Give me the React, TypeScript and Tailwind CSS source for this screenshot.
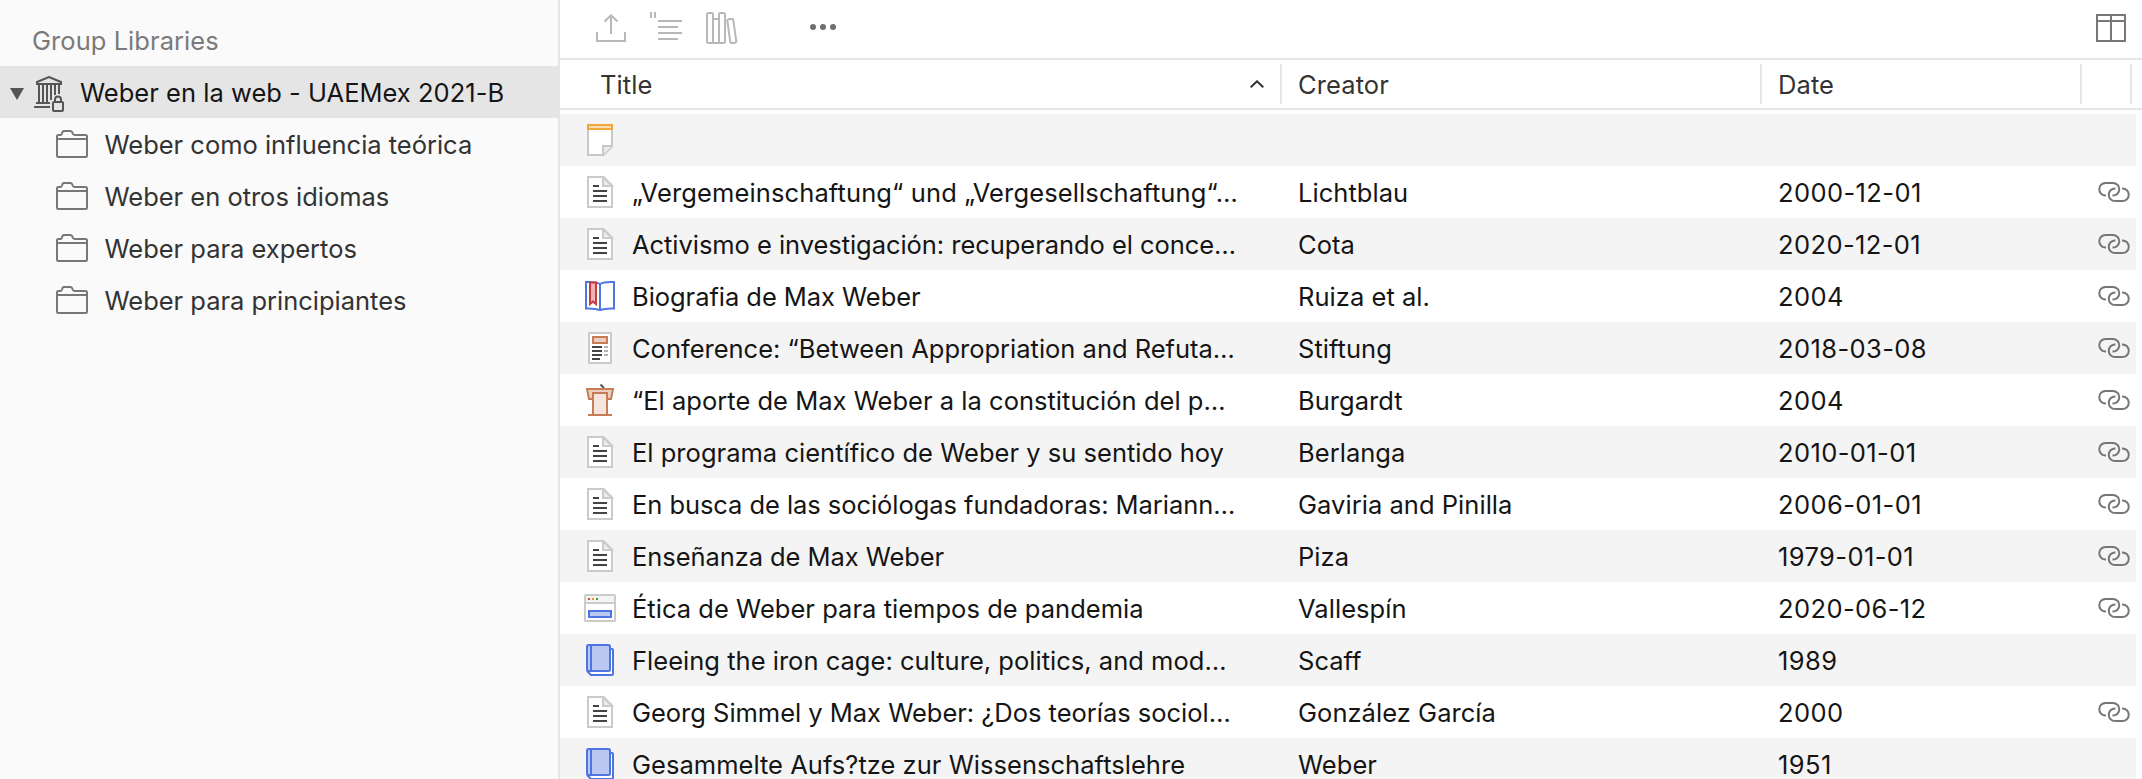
import React from "react";

type Kind = "note" | "article" | "dictionary" | "news" | "podium" | "web" | "book";
type Row = { kind: Kind; title: string; tracking?: string; creator: string; date: string; link: boolean };

const rows: Row[] = [
  { kind: "note", title: "", creator: "", date: "", link: false },
  { kind: "article", title: "„Vergemeinschaftung“ und „Vergesellschaftung“…", tracking: "tracking-[0.12px]", creator: "Lichtblau", date: "2000-12-01", link: true },
  { kind: "article", title: "Activismo e investigación: recuperando el conce…", tracking: "tracking-[-0.05px]", creator: "Cota", date: "2020-12-01", link: true },
  { kind: "dictionary", title: "Biografia de Max Weber", tracking: "tracking-[-0.05px]", creator: "Ruiza et al.", date: "2004", link: true },
  { kind: "news", title: "Conference: “Between Appropriation and Refuta…", tracking: "tracking-[-0.01px]", creator: "Stiftung", date: "2018-03-08", link: true },
  { kind: "podium", title: "“El aporte de Max Weber a la constitución del p…", tracking: "tracking-[0.02px]", creator: "Burgardt", date: "2004", link: true },
  { kind: "article", title: "El programa científico de Weber y su sentido hoy", tracking: "tracking-[0.02px]", creator: "Berlanga", date: "2010-01-01", link: true },
  { kind: "article", title: "En busca de las sociólogas fundadoras: Mariann…", tracking: "tracking-[-0.06px]", creator: "Gaviria and Pinilla", date: "2006-01-01", link: true },
  { kind: "article", title: "Enseñanza de Max Weber", tracking: "tracking-[-0.07px]", creator: "Piza", date: "1979-01-01", link: true },
  { kind: "web", title: "Ética de Weber para tiempos de pandemia", tracking: "tracking-[0.03px]", creator: "Vallespín", date: "2020-06-12", link: true },
  { kind: "book", title: "Fleeing the iron cage: culture, politics, and mod…", tracking: "tracking-[0.02px]", creator: "Scaff", date: "1989", link: false },
  { kind: "article", title: "Georg Simmel y Max Weber: ¿Dos teorías sociol…", tracking: "tracking-[-0.02px]", creator: "González García", date: "2000", link: true },
  { kind: "book", title: "Gesammelte Aufs?tze zur Wissenschaftslehre", tracking: "tracking-[0.03px]", creator: "Weber", date: "1951", link: false },
];

const folders = ["Weber como influencia teórica", "Weber en otros idiomas", "Weber para expertos", "Weber para principiantes"];

function ItemIcon({ kind }: { kind: Kind }) {
  return (
    <svg className="size-8 shrink-0" viewBox="0 0 32 32" fill="none" strokeWidth="2">
      {kind === "note" && (
        <>
          <path d="M4 5V31H19.5L28 22.5V5Z" fill="#fff" stroke="#c8c8c8" />
          <path d="M19 31V22H28" fill="#ececec" stroke="#c8c8c8" />
          <path d="M4 1H28V5H4Z" fill="#f9dfb3" stroke="#f0a73a" />
        </>
      )}
      {kind === "article" && (
        <>
          <path d="M4 1H19.5L28 9.5V31H4Z" fill="#fff" stroke="#cbcbcb" />
          <path d="M19 1V10H28Z" fill="#ececec" stroke="#cbcbcb" />
          <path d="M9 10H15M9 15H23M9 20H23M9 25H23" stroke="#444" />
        </>
      )}
      {kind === "dictionary" && (
        <>
          <path d="M16 4C12 1.600 8 2 2 2V28.500C8 28.300 12 28.500 16 30.200C20 28.500 24 28.300 30 28.500V2C24 2 20 1.600 16 4Z" fill="#fff" stroke="#5077e0" />
          <path d="M16 4V30" stroke="#5077e0" />
          <path d="M6 2.500H12V24L9 21.500L6 24Z" fill="#efb3b5" stroke="#cb3a41" />
        </>
      )}
      {kind === "news" && (
        <>
          <path d="M5 1H27V31H5Z" fill="#fff" stroke="#cbcbcb" />
          <path d="M9 5H23V11H9Z" fill="#eccfc0" stroke="#c67d56" />
          <path d="M8 15H18M8 19H18M8 23H18M8 27H16" stroke="#444" />
          <path d="M20 15H24M20 19H24M20 23H24" stroke="#b3b3b3" />
        </>
      )}
      {kind === "podium" && (
        <>
          <path d="M16.500 0.500L20 4" stroke="#555" />
          <path d="M3 5H29L27 15H5Z" fill="#eccfc0" stroke="#c67d56" />
          <path d="M9 31V9H23V31" fill="#f4e6df" stroke="#c67d56" />
          <path d="M4 31H28" stroke="#c67d56" />
        </>
      )}
      {kind === "web" && (
        <>
          <rect x="1" y="3" width="30" height="26" rx="1" fill="#fff" stroke="#cbcbcb" />
          <path d="M2 4H30V10H2Z" fill="#f4f4f4" />
          <path d="M1 11H31" stroke="#cbcbcb" />
          <path d="M4 7H6" stroke="#d9443d" />
          <path d="M8 7H10" stroke="#e39b2e" />
          <path d="M12 7H14" stroke="#3f9e3f" />
          <path d="M5 19H27V25H5Z" fill="#b9c7f1" stroke="#4d74e0" />
        </>
      )}
      {kind === "book" && (
        <>
          <path d="M26 5H28Q29 5 29 6V30Q29 31 28 31H7L3 27" fill="#fff" stroke="#4d74e0" />
          <rect x="3" y="1" width="23" height="26" rx="1.500" fill="#b9c7f1" stroke="#4d74e0" />
          <path d="M7 1V27" stroke="#4d74e0" />
        </>
      )}
    </svg>
  );
}

function Folder() {
  return (
    <svg className="h-[28px] w-8 shrink-0" viewBox="0 0 32 28" fill="none" stroke="#777" strokeWidth="2">
      <path d="M1 9V6.500Q1 5 2.500 5H4.500Q5.500 5 6 3.500Q6.500 1 8 1H14.500Q16 1 16.500 3Q17 5 18.500 5H29.500Q31 5 31 6.500V25.500Q31 27 29.500 27H2.500Q1 27 1 25.500V9H31" />
    </svg>
  );
}

function LinkIcon() {
  return (
    <svg className="h-5 w-8 shrink-0" viewBox="0 0 32 20" fill="none" stroke="#777" strokeWidth="2">
      <path d="M8 13.500H7.500A6.200 6.200 0 0 1 7.500 1H15A6.200 6.200 0 0 1 15 13.500H14.500" />
      <path d="M24 6.500H24.500A6.200 6.200 0 0 1 24.500 19H17A6.200 6.200 0 0 1 17 6.500H17.500" />
    </svg>
  );
}

export default function App() {
  return (
    <div className="flex h-[779px] w-[2142px] overflow-hidden bg-white font-['Inter',sans-serif] text-[25.5px] leading-[52px] whitespace-nowrap text-[#151515]">
      <aside className="w-[560px] shrink-0 border-r-2 border-[#e5e5e5] bg-[#fafafa]">
        <div className="h-[66px] pt-[15px] pl-8 tracking-[0.05px] text-[#7a7a7a]">Group Libraries</div>
        <div className="flex h-[52px] w-[560px] items-center bg-[#e5e5e5] pl-[10px]">
          <svg className="mt-1 h-3 w-[14px]" viewBox="0 0 14 12"><path d="M0 0H14L7 12Z" fill="#555" /></svg>
          <svg className="mt-1 ml-[10px] h-9 w-[30px]" viewBox="0 0 30 36" fill="none" stroke="#555" strokeWidth="2">
            <path d="M3 8V6L15 1L27 6V8ZM5 8V27M9 8V27M13 8V27M17 8V24M21 8V19M25 8V18M2 27H16M0 31H16" />
            <rect x="19" y="26" width="10" height="9" rx="1" />
            <path d="M21 26V23.500A3 3 0 0 1 27 23.500V26" />
          </svg>
          <span className="ml-4 pt-[2px] tracking-[0.02px]">Weber en la web - UAEMex 2021-B</span>
        </div>
        {folders.map((name) => (
          <div key={name} className="flex h-[52px] items-center pl-14 text-[#333]">
            <Folder />
            <span className="ml-[16.5px] pt-[2px] tracking-[-0.02px]">{name}</span>
          </div>
        ))}
      </aside>
      <main className="flex min-w-0 flex-1 flex-col">
        <div className="flex h-[60px] shrink-0 items-start border-b-2 border-[#e5e5e5] pt-3 pr-4 pl-9">
          <svg className="mt-[2px] h-7 w-[30px]" viewBox="0 0 30 28" fill="none" stroke="#b8b8b8" strokeWidth="2">
            <path d="M1 18V27H29V18M15 20V2M8.500 7.500L15 1.300L21.500 7.500" />
          </svg>
          <svg className="ml-6 h-7 w-8" viewBox="0 0 32 28" fill="none" stroke="#b8b8b8" strokeWidth="2">
            <path d="M1 0V6M5 0V6M8 9H32M8 15H28M8 21H32M8 27H28" />
          </svg>
          <svg className="ml-6 h-8 w-8" viewBox="0 0 32 32" fill="none" stroke="#b8b8b8" strokeWidth="2">
            <rect x="1" y="1" width="6" height="30" rx="1.500" />
            <rect x="13" y="1" width="6" height="30" rx="1.500" />
            <path d="M7 7H13M7 31H13" />
            <rect x="22.800" y="7" width="6" height="24" rx="1.500" transform="rotate(-8 25.800 19)" />
          </svg>
          <svg className="mt-3 ml-[72px] h-[6px] w-[26px]" viewBox="0 0 26 6" fill="#707070">
            <circle cx="3" cy="3" r="3" /><circle cx="13" cy="3" r="3" /><circle cx="23" cy="3" r="3" />
          </svg>
          <svg className="mt-[2px] ml-auto h-7 w-[30px]" viewBox="0 0 30 28" fill="none" stroke="#777" strokeWidth="2">
            <path d="M1 1H29V27H1ZM1 7H29M15 1V27" />
          </svg>
        </div>
        <div className="flex h-[50px] shrink-0 items-center border-b-2 border-[#e5e5e5] tracking-[0.1px] text-[#333]">
          <div className="flex h-10 w-[722px] items-center justify-between border-r-2 border-[#e5e5e5] pr-4 pl-10">
            <span className="pt-[2px]">Title</span>
            <svg className="h-2 w-[14px]" viewBox="0 0 14 8" fill="none" stroke="#333" strokeWidth="2"><path d="M0.700 7.300L7 1.300L13.300 7.300" /></svg>
          </div>
          <div className="flex h-10 w-[480px] items-center border-r-2 border-[#e5e5e5] pt-[2px] pl-4">Creator</div>
          <div className="flex h-10 w-[320px] items-center border-r-2 border-[#e5e5e5] pt-[2px] pl-4">Date</div>
          <div className="h-10 w-[50px] border-r-2 border-[#e5e5e5]" />
        </div>
        <div className="mt-1 mr-[6px]">
          {rows.map((r, i) => (
            <div key={i} className="flex h-[52px] items-center pl-6 odd:bg-[#f4f4f4]">
              <ItemIcon kind={r.kind} />
              <span className={`w-[682px] pt-[2px] pl-4 ${r.tracking ?? ""}`}>{r.title}</span>
              <span className="w-[480px] pt-[2px] tracking-[0.04px]">{r.creator}</span>
              <span className="w-[320px] pt-[2px] tracking-[0.4px]">{r.date}</span>
              {r.link && <LinkIcon />}
            </div>
          ))}
        </div>
      </main>
    </div>
  );
}
